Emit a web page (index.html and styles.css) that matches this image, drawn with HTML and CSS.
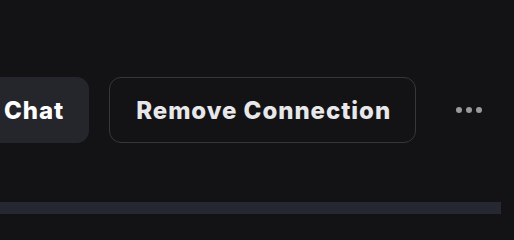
FILE: index.html
```html
<!DOCTYPE html>
<html>
<head>
<meta charset="utf-8">
<link rel="stylesheet" href="styles.css">
</head>
<body>
<div class="page">
  <div class="actions">
    <button class="btn btn-chat">Chat</button>
    <button class="btn btn-remove">Remove Connection</button>
    <button class="more" aria-label="More">
      <span class="dot"></span><span class="dot"></span><span class="dot"></span>
    </button>
  </div>
  <div class="panel"></div>
</div>
</body>
</html>
```
FILE: styles.css
```css
html, body {
  margin: 0;
  padding: 0;
  background: #131316;
  overflow: hidden;
  height: 214px;
}
.page {
  width: 514px;
  height: 214px;
  overflow: hidden;
  font-family: "Inter", "Noto Sans", sans-serif;
}
.actions {
  display: flex;
  align-items: center;
  gap: 20px;
  padding-top: 77px;
  margin-left: -23px;
}
.btn {
  height: 66px;
  box-sizing: border-box;
  border-radius: 12px;
  font-family: inherit;
  font-size: 24px;
  font-weight: 800;
  letter-spacing: 0.95px;
  padding: 0 24px 0 26px;
  cursor: pointer;
  white-space: nowrap;
}
.btn-chat {
  background: #25262b;
  border: 1px solid #25262b;
  color: #ffffff;
}
.btn-remove {
  background: #131316;
  border: 1px solid #36373c;
  color: #e8e8ea;
}
.more {
  background: none;
  border: none;
  padding: 0;
  margin-left: 20px;
  display: flex;
  gap: 4px;
  align-items: center;
}
.dot {
  width: 6px;
  height: 6px;
  border-radius: 50%;
  background: #9a9a9e;
}
.panel {
  margin-top: 59px;
  width: 501px;
  height: 12px;
  background: #252831;
}
```
